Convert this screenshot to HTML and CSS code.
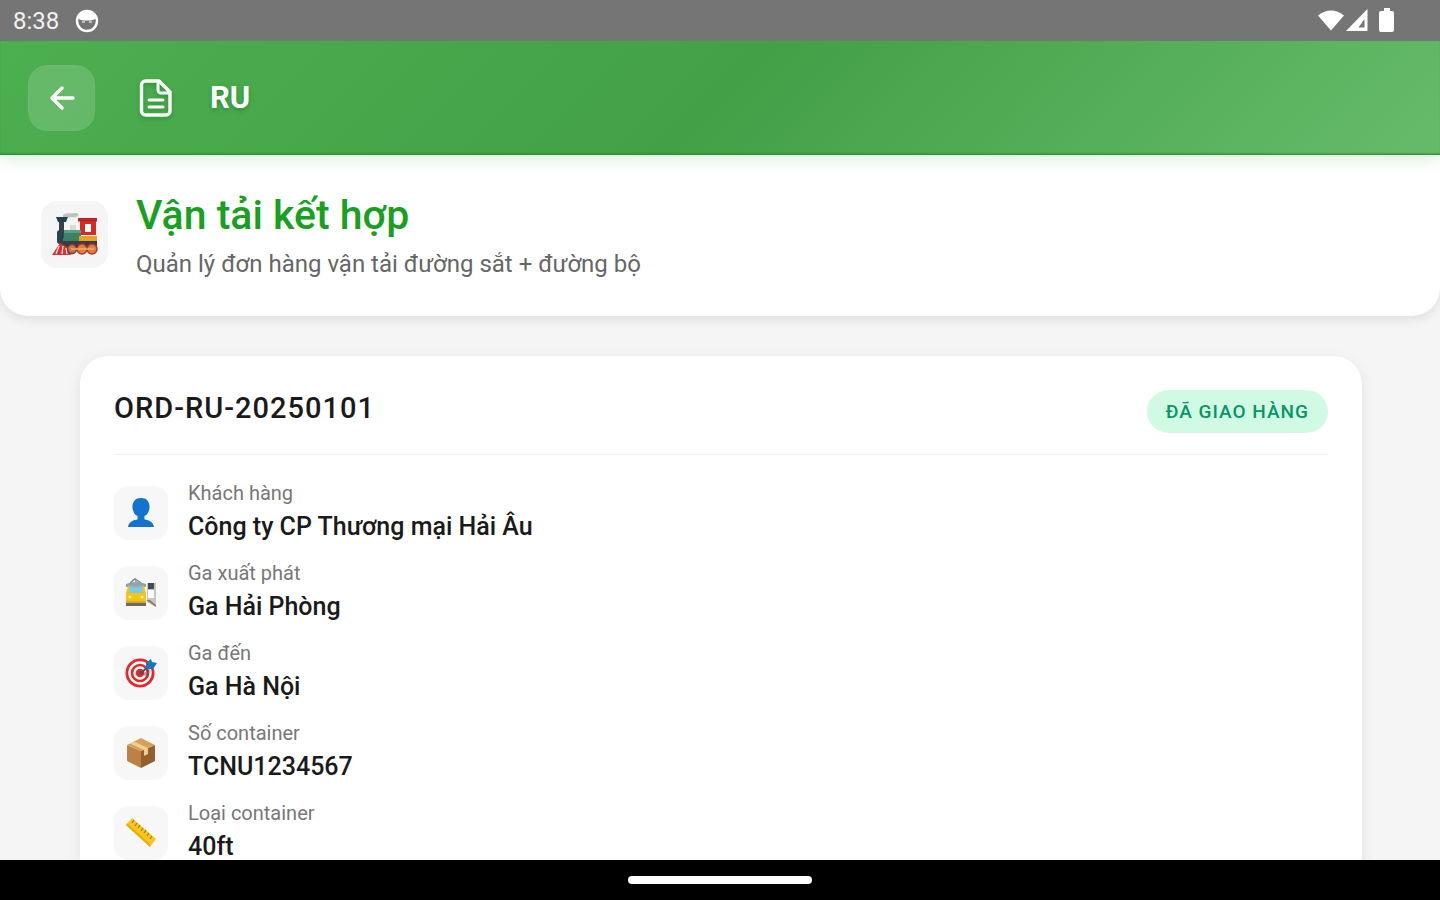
FILE: index.html
```
<!DOCTYPE html>
<html lang="vi">
<head>
    <meta charset="UTF-8">
    <meta name="viewport" content="width=device-width, initial-scale=1.0">
    <title>RU</title>
    <link rel="stylesheet" href="styles.css">
</head>
<body>
    <div class="status-bar">
        <div class="status-left">
            <span>8:38</span>
            <svg width="24" height="24" viewBox="0 0 24 24">
                <circle cx="12" cy="12" r="10" fill="none" stroke="#fff" stroke-width="2.4"/>
                <path d="M3 9a9.5 9.5 0 0 1 18 0c-1.500 2-4 2.500-9 2.500S4.500 11 3 9z" fill="#fff"/>
                <path d="M7 13h3M14 13h3" stroke="#d5d5d5" stroke-width="1.500"/>
            </svg>
        </div>
        <div class="status-right">
            <svg width="28" height="24" viewBox="0 0 28 24"><path d="M0 6.500Q13-3.500 26 6.500L13 21.500z" fill="#fff"/></svg>
            <svg width="24" height="24" viewBox="0 0 24 24"><path d="M0 22L21.500 0v22z" fill="#fff"/><path d="M12.500 18.500l6-8.500v8.500z" fill="#757575"/></svg>
            <svg class="battery" width="16" height="25" viewBox="0 0 16 25"><path d="M5 0h6v3h2q2 0 2 2v17q0 2-2 2H2q-2 0-2-2V5q0-2 2-2h3z" fill="#fff"/></svg>
        </div>
    </div>

    <header class="app-header">
        <button class="back-button" aria-label="Quay lại">
            <svg width="28" height="28" viewBox="0 0 28 28" fill="none" stroke="#fff" stroke-width="3.400" stroke-linecap="round" stroke-linejoin="round">
                <path d="M25 14H4M14 4L4 14l10 10"/>
            </svg>
        </button>
        <svg class="doc-icon" width="40" height="40" viewBox="0 0 40 40" fill="none" stroke="#fff" stroke-width="3.400" stroke-linecap="round" stroke-linejoin="round">
            <path d="M9 3h14l11 11v19a4 4 0 0 1-4 4H9.500a4 4 0 0 1-4-4V7a4 4 0 0 1 4-4z"/>
            <path d="M22 4v8a3 3 0 0 0 3 3h8M13 22h14M13 29h14" stroke-width="3"/>
        </svg>
        <h1>RU</h1>
    </header>

    <section class="summary">
        <div class="summary-icon">
            <svg width="48" height="48" viewBox="0 0 48 48">
                <path d="M12 4c4-3 8-1 12-2 4-.5 5 3 1 4-4 .8-9-.5-13 1z" fill="#bdc2c3"/>
                <path d="M29 9h16v15H29z" fill="#d92a20"/>
                <path d="M27 7h19v3.500H27z" fill="#b92724"/>
                <path d="M34 13h6v8h-6z" fill="#fff"/>
                <path d="M10 19h20v13H10z" fill="#398266"/>
                <path d="M10 19h20v3H10z" fill="#55a17f"/>
                <path d="M19 14h6v5h-6z" fill="#d8d9d9"/>
                <path d="M8 10h5v17H8z" fill="#35444b"/>
                <path d="M5 6h12l-2 5H7z" fill="#263f4b"/>
                <rect x="6" y="19" width="6" height="14" rx="3" fill="#29434c"/>
                <path d="M28 25h18v5H28z" fill="#e9a126"/>
                <path d="M10 30h36v6H10z" fill="#3c3b40"/>
                <path d="M9 32L1 44h19l-4-8z" fill="#d83530"/>
                <path d="M8 35l-3 8M12 35l-1 8M15 37l1 6" stroke="#eee" stroke-width="1.200"/>
                <path d="M16 36h29" stroke="#252b32" stroke-width="3"/>
                <circle cx="21" cy="38" r="4.500" fill="#c77559" stroke="#7f373b" stroke-width="1.500"/>
                <circle cx="31" cy="38" r="5" fill="#e07c4c" stroke="#ad3932" stroke-width="1.500"/>
                <circle cx="41" cy="38" r="5" fill="#e07c4c" stroke="#ad3932" stroke-width="1.500"/>
                <path d="M20 38h23" stroke="#eeb346" stroke-width="1.500"/>
            </svg>
        </div>
        <div>
            <h2>Vận tải kết hợp</h2>
            <p>Quản lý đơn hàng vận tải đường sắt + đường bộ</p>
        </div>
    </section>

    <main>
        <article class="order-card">
            <div class="order-header">
                <h3>ORD-RU-20250101</h3>
                <span class="badge">ĐÃ GIAO HÀNG</span>
            </div>
            <dl class="order-details">
                <div class="detail">
                    <div class="detail-icon">
                        <svg width="32" height="32" viewBox="0 0 32 32"><path d="M16 1c6 0 9 4 8.500 10-.4 4-2.500 7-5 8v3.500c5 .5 9 3 9.500 7.500H3c.5-4.500 4.500-7 9.500-7.500V19c-2.500-1-4.600-4-5-8C7 5 10 1 16 1z" fill="#1374cf"/></svg>
                    </div>
                    <div>
                        <dt>Khách hàng</dt>
                        <dd>Công ty CP Thương mại Hải Âu</dd>
                    </div>
                </div>
                <div class="detail">
                    <div class="detail-icon">
                        <svg width="32" height="32" viewBox="0 0 32 32">
                            <path d="M5 6l5-4 6 4" fill="none" stroke="#6e858c" stroke-width="1.500"/>
                            <path d="M1 7q10-4 20 0v3H1z" fill="#8ba2a8"/>
                            <path d="M3 9h16l2 7v8H1v-8z" fill="#f5c414"/>
                            <path d="M5 9h12l1 7H4z" fill="#79c9ea"/>
                            <path d="M4 9h14M11 3v4" stroke="#9cabad" stroke-width="2"/>
                            <circle cx="5" cy="20" r="1.500" fill="#fff4b0"/><circle cx="17" cy="20" r="1.500" fill="#fff4b0"/>
                            <path d="M1 24h20v2H1z" fill="#d8aa24"/><path d="M1 26h20v3H1z" fill="#66686a"/>
                            <path d="M22 6h9v24l-9-5z" fill="#c5c7c6"/>
                            <path d="M23 6h6v6h-6z" fill="#414b51"/>
                            <path d="M23 13h6v8h-6z" fill="#fff"/>
                            <path d="M21 23h4l6 5v2z" fill="#8d8066"/>
                        </svg>
                    </div>
                    <div>
                        <dt>Ga xuất phát</dt>
                        <dd>Ga Hải Phòng</dd>
                    </div>
                </div>
                <div class="detail">
                    <div class="detail-icon">
                        <svg width="32" height="32" viewBox="0 0 32 32">
                            <circle cx="15" cy="16" r="14.500" fill="#e5272b"/>
                            <circle cx="15" cy="16" r="10.500" fill="none" stroke="#fff" stroke-width="2.400"/>
                            <circle cx="15" cy="16" r="5.500" fill="none" stroke="#fff" stroke-width="2.400"/>
                            <path d="M15 17l11-10" stroke="#36566d" stroke-width="2"/>
                            <path d="M21 12V6l5-4 1 3 5 1-4 6z" fill="#1976c5"/>
                            <path d="M17 17l8-5-2 9z" fill="#7a3e50" opacity=".5"/>
                        </svg>
                    </div>
                    <div>
                        <dt>Ga đến</dt>
                        <dd>Ga Hà Nội</dd>
                    </div>
                </div>
                <div class="detail">
                    <div class="detail-icon">
                        <svg width="32" height="32" viewBox="0 0 32 32">
                            <path d="M2 8l14 6v17L2 24z" fill="#bd8145"/>
                            <path d="M16 14l14-6v16l-14 7z" fill="#94602f"/>
                            <path d="M2 8l14-7 14 7-14 6z" fill="#d6a05a"/>
                            <path d="M9 4.500L23 11v6l-4 2v-6L5 6.500z" fill="#f0cf8e"/>
                        </svg>
                    </div>
                    <div>
                        <dt>Số container</dt>
                        <dd>TCNU1234567</dd>
                    </div>
                </div>
                <div class="detail">
                    <div class="detail-icon">
                        <svg width="32" height="32" viewBox="0 0 32 32">
                            <path d="M7 1l24 21-6 8L1 8z" fill="#f9c719"/>
                            <path d="M1 8l24 22v-3L2 6z" fill="#e8ac14"/>
                            <path d="M9 3l-2 3M12 6l-2 3M15 8l-2 3M18 11l-2 3M21 13l-2 3M24 16l-2 3M27 19l-2 3" stroke="#a17b1c" stroke-width="1.200"/>
                        </svg>
                    </div>
                    <div>
                        <dt>Loại container</dt>
                        <dd>40ft</dd>
                    </div>
                </div>
            </dl>
        </article>
    </main>

    <footer class="gesture-bar">
        <div class="gesture-handle"></div>
    </footer>
</body>
</html>
```

FILE: styles.css
```
* {
    box-sizing: border-box;
    margin: 0;
    padding: 0;
}

body {
    display: flex;
    flex-direction: column;
    height: 100vh;
    overflow: hidden;
    background: #f5f5f5;
    color: #1a1a1a;
    font-family: Roboto, "Noto Sans", sans-serif;
}

svg {
    display: block;
    flex-shrink: 0;
}

/* Status bar */
.status-bar {
    display: flex;
    justify-content: space-between;
    align-items: center;
    flex-shrink: 0;
    height: 41px;
    padding: 0 45px 0 13px;
    background: #757575;
    color: #f2f2f2;
    font-size: 24px;
}

.status-left,
.status-right {
    display: flex;
    align-items: center;
}

.status-left {
    gap: 16px;
}

.battery {
    margin-left: 9px;
}

/* Header */
.app-header {
    display: flex;
    align-items: center;
    flex-shrink: 0;
    padding: 24px 28px;
    background: linear-gradient(135deg, #4caf50 0%, #43a047 50%, #66bb6a 100%);
    box-shadow: inset 0 -2px 1px rgba(30, 145, 40, 0.6), 0 4px 16px rgba(76, 175, 80, 0.2);
    color: #fff;
    position: relative;
    z-index: 2;
}

.back-button {
    display: flex;
    align-items: center;
    justify-content: center;
    width: 67px;
    height: 66px;
    border: 1px solid rgba(255, 255, 255, 0.04);
    border-radius: 20px;
    background: rgba(255, 255, 255, 0.15);
}

.doc-icon {
    margin: 0 34px 0 41px;
    filter: drop-shadow(0 2px 2px rgba(0, 110, 10, 0.4));
}

h1 {
    font-size: 31px;
    font-weight: 700;
    line-height: 40px;
    text-shadow: 0 2px 4px rgba(0, 100, 10, 0.4);
}

/* Summary */
.summary {
    display: flex;
    align-items: center;
    flex-shrink: 0;
    gap: 28px;
    padding: 34px 41px 36px;
    background: #fff;
    border-radius: 0 0 28px 28px;
    box-shadow: 0 3px 12px rgba(0, 0, 0, 0.1);
}

.summary-icon {
    display: flex;
    align-items: center;
    justify-content: center;
    width: 67px;
    height: 67px;
    border-radius: 16px;
    background: #f5f5f5;
}

h2 {
    color: #18a021;
    font-size: 41px;
    font-weight: 500;
    line-height: 52px;
}

.summary p {
    margin-top: 7px;
    color: #666;
    font-size: 24px;
    line-height: 32px;
}

/* Order card */
main {
    flex: 1;
    min-height: 0;
    overflow: hidden;
    padding: 40px 78px 0 80px;
}

.order-card {
    padding: 34px;
    background: #fff;
    border-radius: 28px;
    box-shadow: 0 3px 14px rgba(0, 0, 0, 0.08);
}

.order-header {
    display: flex;
    justify-content: space-between;
    align-items: flex-start;
    padding-bottom: 21px;
    border-bottom: 1px solid #f0f0f0;
}

h3 {
    font-size: 29px;
    font-weight: 500;
    line-height: 36px;
    letter-spacing: 1px;
}

.badge {
    padding: 0 19px;
    border-radius: 22px;
    background: #d1fae5;
    color: #059669;
    font-size: 19px;
    font-weight: 500;
    line-height: 43px;
    letter-spacing: 1px;
}

.order-details {
    display: flex;
    flex-direction: column;
    gap: 12px;
    padding-top: 24px;
}

.detail {
    display: flex;
    align-items: center;
    gap: 20px;
}

.detail-icon {
    display: flex;
    align-items: center;
    justify-content: center;
    width: 54px;
    height: 54px;
    border-radius: 14px;
    background: #f7f7f7;
}

dt {
    color: #777;
    font-size: 20px;
    line-height: 28px;
}

dd {
    font-size: 25px;
    font-weight: 500;
    line-height: 40px;
}

/* Gesture navigation */
.gesture-bar {
    display: flex;
    align-items: center;
    justify-content: center;
    flex-shrink: 0;
    height: 40px;
    background: #000;
    position: relative;
}

.gesture-handle {
    width: 184px;
    height: 8px;
    border-radius: 4px;
    background: #fff;
}
```
